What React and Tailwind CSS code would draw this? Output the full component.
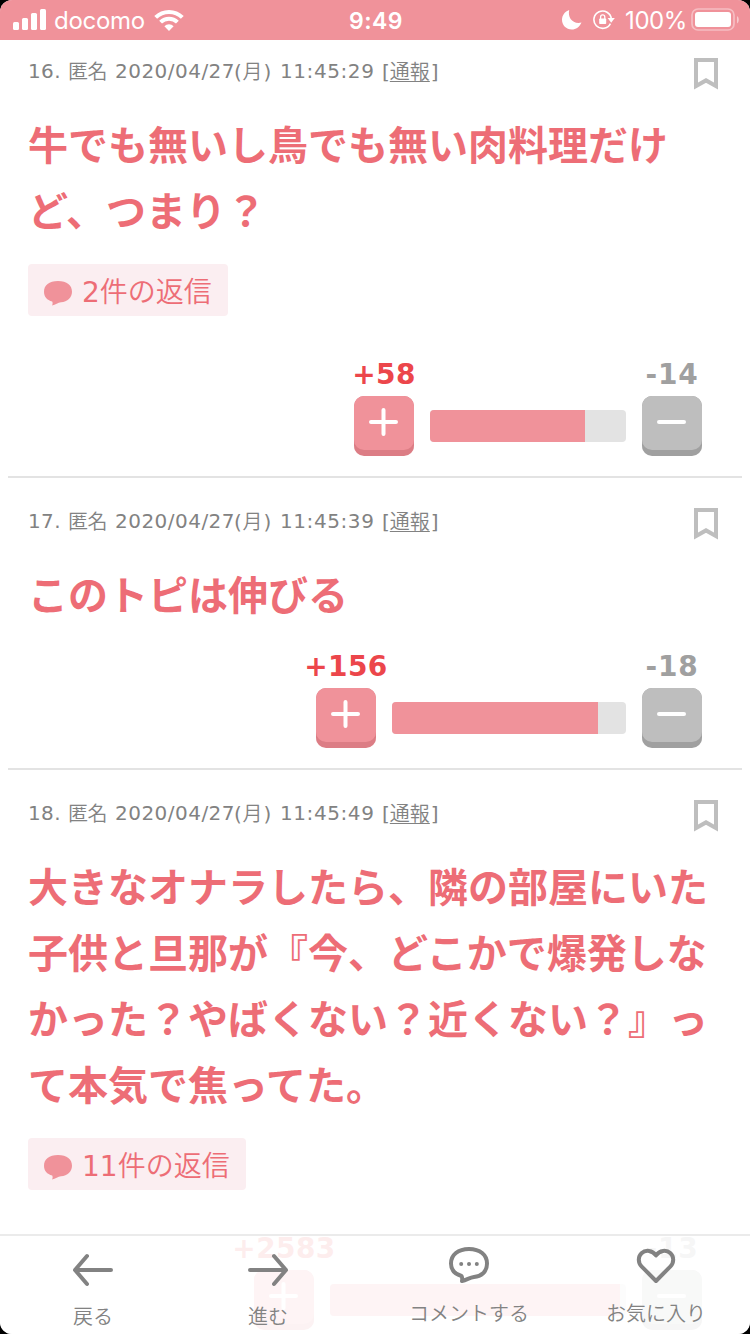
import React from "react";

const comments = [
  {
    id: 16,
    time: "11:45:29",
    lines: ["牛でも無いし鳥でも無い肉料理だけ", "ど、つまり？"],
    replies: 2,
    plus: 58,
    minus: 14,
    barWidth: 196,
    fillWidth: 155,
  },
  {
    id: 17,
    time: "11:45:39",
    lines: ["このトピは伸びる"],
    replies: 0,
    plus: 156,
    minus: 18,
    barWidth: 234,
    fillWidth: 206,
  },
  {
    id: 18,
    time: "11:45:49",
    lines: [
      "大きなオナラしたら、隣の部屋にいた",
      "子供と旦那が『今、どこかで爆発しな",
      "かった？やばくない？近くない？』っ",
      "て本気で焦ってた。",
    ],
    replies: 11,
    plus: 2583,
    minus: 13,
    barWidth: 296,
    fillWidth: 290,
  },
];

const StatusBar = () => (
  <header className="relative z-10 flex h-10 items-center justify-between bg-[#f0929a] pr-[11px] pl-[13px] font-['Inter',sans-serif] text-[24px] leading-10 text-white">
    <div className="flex flex-1 items-center">
      <svg width="33" height="22" viewBox="0 0 33 22" fill="currentColor">
        <rect x="0" y="13" width="6" height="8" rx="1.5" />
        <rect x="9" y="9" width="6" height="12" rx="1.5" />
        <rect x="18" y="4" width="6" height="17" rx="1.5" />
        <rect x="27" y="0" width="6" height="21" rx="1.5" />
      </svg>
      <span className="mt-px ml-2 w-[90px] tracking-[-0.3px] whitespace-nowrap">docomo</span>
      <svg className="ml-[10px]" width="30" height="22" viewBox="0 0 30 22" fill="none" stroke="currentColor" strokeWidth="4">
        <path d="M1.7 8.4a18.8 18.8 0 0 1 26.6 0" />
        <path d="M6.6 13.2a11.9 11.9 0 0 1 16.8 0" />
        <path d="M10.4 17.2a6.5 6.5 0 0 1 9.2 0L15 22z" fill="currentColor" stroke="none" />
      </svg>
    </div>
    <span className="mt-0.5 text-[23px] font-semibold tracking-[0.5px]">9:49</span>
    <div className="flex flex-1 items-center justify-end">
      <svg width="20" height="20" viewBox="0 0 20 20" fill="currentColor">
        <path d="M7.2 0C5.5 7.5 10.5 14.5 19.5 12.6 17.5 17.2 14 19.600 9.800 19.600 4.200 19.600 0 15.200 0 9.800 0 5.400 2.900 1.500 7.200 0Z" />
      </svg>
      <svg className="ml-[11px]" width="22" height="20" viewBox="0 0 22 20" fill="none" stroke="currentColor" strokeWidth="1.6">
        <path d="M17.4 13.6A8.700 8.700 0 1 1 18.300 9" />
        <path d="M14.600 8h7.200l-3.600 4.800z" fill="currentColor" stroke="none" />
        <rect x="6.200" y="8.500" width="7" height="5.500" rx="0.800" fill="currentColor" stroke="none" />
        <path d="M7.600 9V7a2.100 2.100 0 0 1 4.200 0v2" strokeWidth="1.300" />
      </svg>
      <span className="mt-0.5 ml-[10px] w-[61px] tracking-[-0.4px] whitespace-nowrap">100%</span>
      <svg className="ml-[5px]" width="48" height="24" viewBox="0 0 48 24">
        <rect x="1" y="1" width="42" height="21" rx="6" fill="none" stroke="#fff" strokeOpacity="0.4" strokeWidth="1.700" />
        <rect x="4" y="4" width="36" height="15" rx="3" fill="#fff" />
        <path d="M46 8c2.400 1.500 2.400 6 0 7.500z" fill="#fff" fillOpacity="0.5" />
      </svg>
    </div>
  </header>
);

const BookmarkIcon = () => (
  <svg width="24" height="32" viewBox="0 0 24 32" fill="none" stroke="#bebebe" strokeWidth="4">
    <path d="M2 2h20v26l-10-5.600L2 28z" />
  </svg>
);

const ReplyBadge = ({ count }) => (
  <div className="mt-5 flex h-[52px] w-fit items-center rounded bg-[#fbeef1] px-4 text-[28px] leading-[52px] text-[#ed6d76]">
    <svg className="mt-1.5" width="28" height="25" viewBox="0 0 28 25" fill="#f0929a">
      <path d="M14 0C23 0 28 4.400 28 10.700 28 16.500 23.500 20.800 17 21.200 14 21.400 11.500 23.800 8 24.500 8.800 23 8.800 22 8.200 20.400 3 19.200 0 15.600 0 10.700 0 4.400 5 0 14 0Z" />
    </svg>
    <span className="mt-0.5 ml-[10px] whitespace-nowrap">
      {count}
      <span className="font-['Noto_Sans_CJK_JP',sans-serif] font-[350]">件の返信</span>
    </span>
  </div>
);

const VoteButton = ({ type, count }) => {
  const isPlus = type === "plus";
  return (
    <div className="flex w-[60px] flex-col items-center">
      <span
        className={`h-[37px] text-[28px] leading-[32px] font-bold whitespace-nowrap ${
          isPlus ? "tracking-[0.4px] text-[#ec464b]" : "tracking-[0.8px] text-[#a0a0a0]"
        }`}
      >
        {isPlus ? "+" : "-"}
        {count}
      </span>
      <button
        className={`flex h-[60px] w-[60px] justify-center rounded-[10px] border-b-[6px] ${
          isPlus ? "border-[#dc7d85] bg-[#dc7d85]" : "border-[#a0a0a0] bg-[#a0a0a0]"
        }`}
      >
        <span
          className={`flex h-[54px] w-[60px] shrink-0 items-center justify-center rounded-[10px] ${
            isPlus ? "bg-[#f0929a]" : "bg-[#bebebe]"
          }`}
        >
          <svg width="30" height="30" viewBox="0 0 30 30" stroke="#fff" strokeWidth="4" strokeLinecap="round">
            <path d={isPlus ? "M2 14h25M14.500 2v24" : "M2 14h25"} />
          </svg>
        </span>
      </button>
    </div>
  );
};

const Comment = ({ comment }) => (
  <article className="mx-2 h-auto shrink-0 border-b-2 border-[#e3e3e3] pr-10 pb-5 pl-5">
    <div className="-mr-4 flex h-[84px] items-start justify-between pt-[28px]">
      <p className="flex text-[20px] leading-[30px] whitespace-pre text-[#828282]">
        <span className="w-[40px] tracking-[0.4px]">{comment.id}.</span>
        <span className="w-[47px] font-['Noto_Sans_CJK_JP',sans-serif] font-[350] tracking-[-0.5px]">匿名</span>
        <span className="w-[119px] tracking-[0.47px]">2020/04/27</span>
        <span className="w-[46px] tracking-[0.8px]">
          (<span className="font-['Noto_Sans_CJK_JP',sans-serif] font-[350]">月</span>)
        </span>
        <span className="w-[102px] tracking-[0.58px]">{comment.time}</span>
        <span>
          [
          <span className="font-['Noto_Sans_CJK_JP',sans-serif] font-[350] underline decoration-1 underline-offset-2">
            通報
          </span>
          <span className="ml-px">]</span>
        </span>
      </p>
      <span className="mt-[2px]">
        <BookmarkIcon />
      </span>
    </div>
    <div className="pt-px text-[40px] leading-[66px] font-bold whitespace-nowrap text-[#ed6d76]">
      {comment.lines.map((line) => (
        <p key={line}>{line}</p>
      ))}
    </div>
    {comment.replies > 0 && (
      <div className="-mt-px">
        <ReplyBadge count={comment.replies} />
      </div>
    )}
    <div className={`flex items-end justify-end ${comment.replies > 0 ? "mt-[43px]" : "mt-[22px]"}`}>
      <VoteButton type="plus" count={comment.plus} />
      <div
        className="mx-4 mb-[14px] h-8 overflow-hidden rounded bg-[#e3e3e3]"
        style={{ width: comment.barWidth }}
      >
        <div className="h-full bg-[#f0929a]" style={{ width: comment.fillWidth }} />
      </div>
      <VoteButton type="minus" count={comment.minus} />
    </div>
  </article>
);

const TabItem = ({ label, className, children }) => (
  <button className={`flex flex-col items-center ${className}`}>
    <svg className="h-[44px] w-[44px]" viewBox="0 0 44 44" fill="none" stroke="#828282" strokeWidth="4" strokeLinecap="round" strokeLinejoin="round">
      {children}
    </svg>
    <span className="font-['Noto_Sans_CJK_JP',sans-serif] text-[20px] leading-[30px] font-[350] whitespace-nowrap text-[#828282]">
      {label}
    </span>
  </button>
);

const BottomNav = () => (
  <nav className="absolute inset-x-0 bottom-0 z-10 flex h-[100px] items-start border-t-2 border-[#ebebeb] bg-white/90">
    <TabItem label="戻る" className="ml-[13px] w-[160px] gap-[9px] pt-[12px]">
      <path d="M40 22H4M16 8L4 22l12 14" />
    </TabItem>
    <TabItem label="進む" className="ml-[15px] w-[160px] gap-[9px] pt-[12px]">
      <path d="M4 22h36M28 8l12 14-12 14" />
    </TabItem>
    <TabItem label="コメントする" className="ml-[41px] w-[160px] gap-[10px] pt-[8px]">
      <path d="M22 5C33 5 40 11 40 19.500 40 28 34 32.500 27 33 22.500 33.500 20 36 15 37 15.500 35 15.500 34 14.500 32 7.500 30 4 25.500 4 19.500 4 11 11 5 22 5Z" />
      <path d="M14.200 20h.01M22 20h.01M29.800 20h.01" />
    </TabItem>
    <TabItem label="お気に入り" className="ml-[27px] w-[160px] gap-[10px] pt-[8px]">
      <path d="M22 37L7.500 22.300C3.800 18.500 4 12.500 7.500 9.200 11.500 5.500 18.500 6 22 11.500 25.500 6 32.500 5.500 36.500 9.200 40 12.500 40.200 18.500 36.500 22.300Z" />
    </TabItem>
  </nav>
);

export default function App() {
  return (
    <div className="h-[1334px] w-[750px] overflow-hidden bg-black">
      <div className="relative flex h-[1334px] flex-col overflow-hidden rounded-[12px] bg-white font-['DejaVu_Sans','Noto_Sans_CJK_JP',sans-serif]">
        <StatusBar />
        <main className="-mt-3 flex flex-col">
          {comments.map((comment) => (
            <Comment key={comment.id} comment={comment} />
          ))}
        </main>
        <BottomNav />
      </div>
    </div>
  );
}
